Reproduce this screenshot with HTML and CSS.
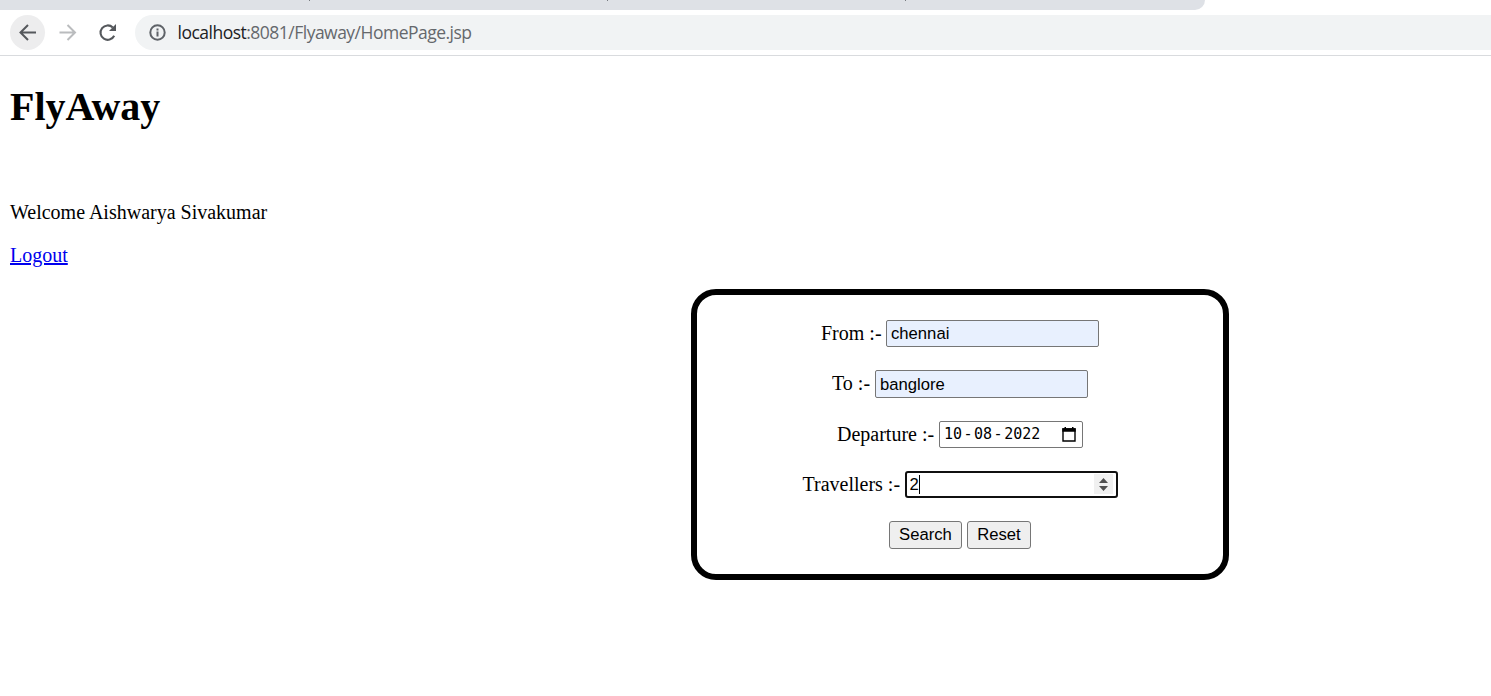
FILE: index.html
```html
<!DOCTYPE html>
<html lang="en">
<head>
<meta charset="utf-8">
<title>FlyAway</title>
<link rel="stylesheet" href="styles.css">
</head>
<body>
<div class="tabs"><div class="tabstrip"><i></i><i></i><i></i></div></div>
<div class="toolbar">
  <div class="nav back"><svg width="20" height="20" viewBox="0 0 20 20" fill="none" stroke="#55585c" stroke-width="2"><path d="M18 9.500H3M10 2L2.500 9.500L10 17"/></svg></div>
  <div class="nav"><svg width="20" height="20" viewBox="0 0 20 20" fill="none" stroke="#babcbe" stroke-width="2"><path d="M1.500 9.500H16.500M9.500 2L17 9.500L9.500 17"/></svg></div>
  <div class="nav"><svg width="20" height="20" viewBox="0 0 20 20"><path d="M16.200 12.800A7.200 7.200 0 1 1 14.800 4.500" fill="none" stroke="#55585c" stroke-width="2.1"/><path d="M18 1V8H11Z" fill="#55585c"/></svg></div>
  <div class="address">
    <svg width="18" height="18" viewBox="0 0 18 18" fill="none" stroke="#5f6368" stroke-width="2"><circle cx="8.500" cy="8.500" r="7.200"/><path d="M8.500 7.500v5M8.500 4.500v2"/></svg>
    <span class="url"><b>localhost</b>:8081/Flyaway/HomePage.jsp</span>
  </div>
</div>
<main class="page">
  <h1>FlyAway</h1>
  <p class="welcome">Welcome Aishwarya Sivakumar</p>
  <p class="logout"><a href="#">Logout</a></p>
  <form class="search">
    <div class="row"><label class="l-from">From :-</label><div class="field filled">chennai</div></div>
    <div class="row"><label class="l-to">To :-</label><div class="field filled tall">banglore</div></div>
    <div class="row"><label class="l-wide">Departure :-</label><div class="field date"><span>10</span><em>-</em><span>08</span><em>-</em><span>2022</span>
      <svg class="calendar" width="14" height="15" viewBox="0 0 14 15"><path d="M1 2h12v12H1z" fill="none" stroke="#000" stroke-width="1.400"/><path d="M.3 1.300h13.400v3.400H.3zM2.500 0H4v2H2.500zM10 0h1.500v2H10z"/></svg></div></div>
    <div class="row"><label class="l-wide">Travellers :-</label><div class="field focus">2<i class="caret"></i><span class="spin"><svg width="9" height="13" viewBox="0 0 9 13" fill="#505050"><path d="M0 5L4.500 0L9 5zM0 8L4.500 13L9 8z"/></svg></span></div></div>
    <div class="row buttons"><button type="button" class="b-search">Search</button><button type="button" class="b-reset">Reset</button></div>
  </form>
</main>
</body>
</html>
```
FILE: styles.css
```css
* { box-sizing: border-box; }
body { margin: 0; height: 696px; overflow: hidden; background: #fff; color: #000; font-family: "Liberation Serif", serif; font-size: 20px; }
.tabs { height: 15px; }
.tabstrip { width: 1205px; height: 10px; background: #dee1e6; border-bottom-right-radius: 10px; display: flex; padding-left: 309px; gap: 297px; }
.tabstrip i { width: 1px; height: 1px; background: #777b80; }
.toolbar { height: 41px; border-bottom: 1px solid #d9dbde; display: flex; align-items: flex-start; padding-left: 10px; gap: 5px; }
.nav { width: 35px; height: 35px; border-radius: 50%; display: flex; align-items: center; justify-content: center; }
.back { background: #ededee; }
.address { flex: 1; margin-left: 5px; height: 35px; background: #f1f3f4; border-radius: 18px 0 0 18px; display: flex; align-items: center; padding-left: 14px; gap: 10.500px; }
.url { font: 17.5px/35px "Open Sans", sans-serif; letter-spacing: -0.51px; color: #65686c; white-space: nowrap; }
.url b { font-weight: 400; color: #202124; }
.page { padding-left: 10px; }
h1 { margin: 0; padding-top: 28px; font-size: 40px; line-height: 46px; }
p { margin: 0; line-height: 23px; }
.welcome { padding-top: 71px; }
.logout { padding-top: 20px; }
a { color: #0000ee; text-decoration: underline; text-decoration-thickness: 2px; }
.search { margin: 22px 0 0 681px; width: 538px; height: 291px; border: 6px solid #000; border-radius: 25px; padding-top: 25px; display: flex; flex-direction: column; gap: 22.500px; }
.row { height: 27.750px; display: flex; justify-content: center; }
label { line-height: 26px; white-space: nowrap; }
.l-from { width: 65px; }
.l-to { width: 43px; }
.l-wide { width: 102px; }
.field { width: 213px; height: 27px; border: 1px solid #767676; border-radius: 2px; padding-left: 4px; font: 16.670px/25px "Liberation Sans", sans-serif; display: flex; align-items: center; }
.filled { background: #e8f0fe; }
.tall { height: 28px; }
.date { width: 144px; font-family: "DejaVu Sans Mono", monospace; font-size: 15px; }
.date em { font-style: normal; width: 12px; text-align: center; }
.calendar { margin-left: auto; margin-right: 6px; }
.focus { border: 2px solid #101010; border-radius: 3px; padding-left: 3px; }
.caret { width: 1px; height: 19px; background: #000; }
.spin { margin-left: auto; margin-right: 3px; width: 19px; height: 20px; background: #f0f0f0; display: flex; align-items: center; justify-content: center; }
.buttons { gap: 5px; }
button { height: 28px; padding: 0; border: 1px solid #767676; border-radius: 3px; background: #efefef; color: #000; font: 16.670px "Liberation Sans", sans-serif; }
.b-search { width: 73px; }
.b-reset { width: 64px; }
```
